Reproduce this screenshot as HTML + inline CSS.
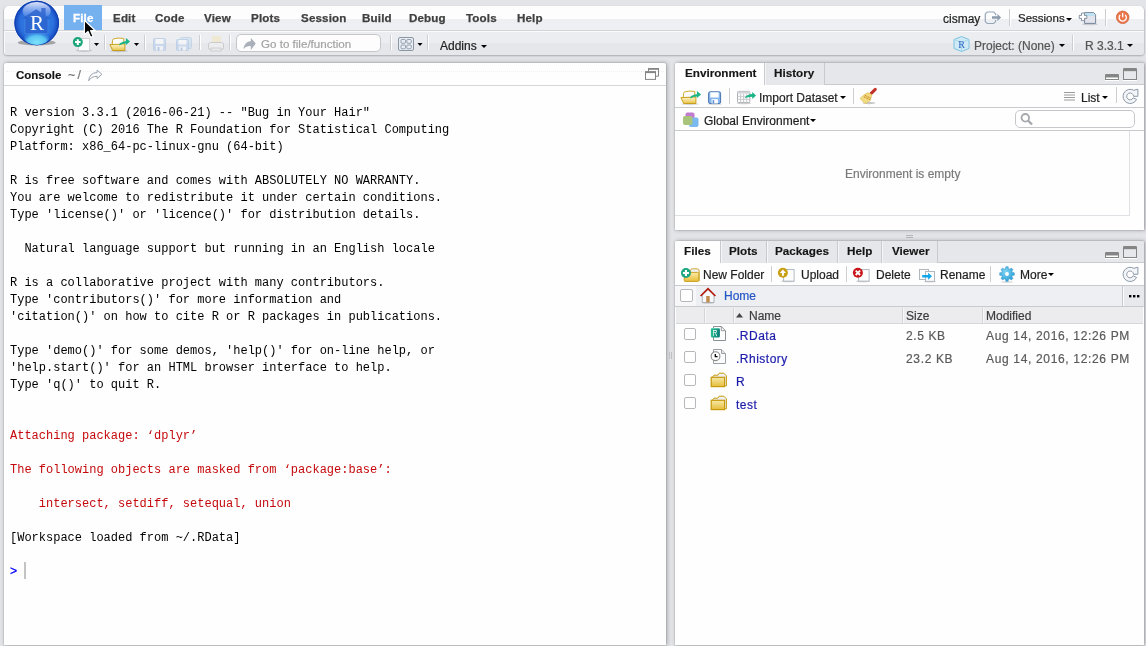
<!DOCTYPE html>
<html><head><meta charset="utf-8">
<style>
*{margin:0;padding:0;box-sizing:border-box}
html,body{-webkit-font-smoothing:antialiased;width:1146px;height:646px;overflow:hidden;background:#e3e4e8;font-family:"Liberation Sans",sans-serif;position:relative}
.a{position:absolute}
.t{position:absolute;white-space:pre;line-height:1;-webkit-text-stroke-width:.2px}
.menu{font-weight:bold;font-size:11.6px;color:#404040;top:12px;letter-spacing:.15px;-webkit-text-stroke:.25px #404040}
.vs{position:absolute;width:1px;background:#cdced2;box-shadow:1px 0 0 #fff}
.pane{position:absolute;background:#fefefe;border-radius:2px 2px 0 0;box-shadow:0 0 0 1px rgba(0,0,0,.06),1px 0 4px rgba(0,0,0,.3)}
.con{font-family:"Liberation Mono",monospace;font-size:12px;color:#000;left:10px;top:105px;line-height:17px;white-space:pre}
.red{color:#c5090c}
.tabbar{position:absolute;background:#e6e7eb;border-bottom:1px solid #c9cace;border-radius:2px 2px 0 0}
.tab{position:absolute;height:22px;background:#e6e7eb;border-right:1px solid #c9cace;box-shadow:inset 1px 0 0 #f6f6f8}
.tab.act{background:#fefefe;height:22px;box-shadow:none}
.tl{position:absolute;white-space:pre;line-height:1;font-weight:bold;font-size:11.7px;color:#151515;-webkit-text-stroke:.15px #151515}
.lbl{position:absolute;white-space:pre;line-height:1;font-size:12px;color:#1e1e1e;-webkit-text-stroke-width:.2px}
.arr{position:absolute;width:0;height:0;border-left:3px solid transparent;border-right:3px solid transparent;border-top:3px solid #000}
.hl{position:absolute;height:1px;background:#c9cace}
.cb{position:absolute;width:12px;height:12px;border:1px solid #b7b7bb;border-radius:2px;background:#fff}
.fn{position:absolute;white-space:pre;line-height:1;font-size:12px;color:#1c1cab;letter-spacing:.5px;-webkit-text-stroke-width:.2px}
.gr{position:absolute;white-space:pre;line-height:1;font-size:12px;color:#5a5a5a;-webkit-text-stroke-width:.2px}
</style></head><body><div id="root" style="position:absolute;left:0;top:0;width:1146px;height:646px;will-change:transform">

<!-- ================= MAIN TOOLBAR ================= -->
<div class="a" style="left:4px;top:6px;width:1140px;height:49px;border-radius:5px 5px 3px 3px;overflow:hidden;box-shadow:0 1px 2px rgba(0,0,0,.25),-1px 0 1px rgba(0,0,0,.08),1px 0 1px rgba(0,0,0,.08)">
  <div class="a" style="left:0;top:0;width:1140px;height:12.5px;background:#fdfdfd"></div>
  <div class="a" style="left:0;top:12.5px;width:1140px;height:11.5px;background:#eeeff2"></div>
  <div class="a" style="left:0;top:24px;width:1140px;height:1px;background:#d3d4d8"></div>
  <div class="a" style="left:0;top:25px;width:1140px;height:1px;background:#fbfbfc"></div>
  <div class="a" style="left:0;top:26px;width:1140px;height:11px;background:#ecedf0"></div>
  <div class="a" style="left:0;top:37px;width:1140px;height:12px;background:#e6e7eb"></div>
  <div class="a" style="left:0;top:25px;width:1px;height:22px;background:#fafafb"></div>
</div>
<div class="a" style="left:64px;top:5px;width:38px;height:25px;background:#75b1ef"></div>
<div class="t menu" style="left:73px;color:#fff;-webkit-text-stroke:.3px #fff">File</div>
<div class="t menu" style="left:113px">Edit</div>
<div class="t menu" style="left:155px">Code</div>
<div class="t menu" style="left:204px">View</div>
<div class="t menu" style="left:251px">Plots</div>
<div class="t menu" style="left:301px">Session</div>
<div class="t menu" style="left:362px">Build</div>
<div class="t menu" style="left:409px">Debug</div>
<div class="t menu" style="left:466px">Tools</div>
<div class="t menu" style="left:517px">Help</div>

<!-- R logo -->
<svg class="a" style="left:12px;top:0px" width="50" height="48" viewBox="0 0 50 48">
  <defs>
    <radialGradient id="rg" cx="50%" cy="50%" r="50%">
      <stop offset="0" stop-color="#3d8fe6"/><stop offset="0.75" stop-color="#2b6fdd"/><stop offset="1" stop-color="#1244bb"/>
    </radialGradient>
    <radialGradient id="glow" cx="50%" cy="85%" r="60%">
      <stop offset="0" stop-color="#7fe2fb"/><stop offset="0.6" stop-color="#58c4f3"/><stop offset="1" stop-color="#3d9ae9" stop-opacity="0"/>
    </radialGradient>
    <linearGradient id="hlg" x1="0" y1="0" x2="0" y2="1"><stop offset="0" stop-color="#eceeff" stop-opacity=".95"/><stop offset="1" stop-color="#8aa8f0" stop-opacity=".1"/></linearGradient>
  </defs>
  <ellipse cx="24.7" cy="42.5" rx="19" ry="3" fill="#000" opacity=".3"/>
  <circle cx="24.7" cy="23" r="22.3" fill="url(#rg)"/>
  <circle cx="24.7" cy="23" r="21.8" fill="none" stroke="#1040b0" stroke-width="1"/>
  <ellipse cx="24.7" cy="36" rx="13" ry="9" fill="url(#glow)"/>
  <ellipse cx="24.7" cy="11" rx="14" ry="9" fill="url(#hlg)"/>
  <path d="M9.4 18.8 L24.3 9.3 L29.3 12.5 L29.3 8.1 L33.6 8.1 L33.6 15.2 L39.2 19 L35.9 19 L35.9 33.6 L13 33.6 L13 18.8 Z" fill="#2a5fcc" opacity=".75"/>
  <path d="M13 19 L13 33.6 L35.9 33.6 L35.9 19" fill="none" stroke="#5a9cf0" stroke-width=".6" opacity=".6"/>
  <text x="25.1" y="29.8" text-anchor="middle" font-family="Liberation Serif" font-size="21" fill="#fff">R</text>
</svg>

<!-- toolbar icons row 2 -->
<svg class="a" style="left:70px;top:34px" width="70" height="20" viewBox="0 0 70 20">
  <ellipse cx="14" cy="16.5" rx="8" ry="1.5" fill="#000" opacity=".15"/>
  <rect x="8.5" y="4.5" width="11" height="12" fill="#fdfdfd" stroke="#cfd3d8"/>
  <circle cx="7.8" cy="8.1" r="5" fill="#1aa57a"/>
  <path d="M7.8 5.3v5.6M5 8.1h5.6" stroke="#fff" stroke-width="2"/>
  <path d="M24 9h5l-2.5 3z" fill="#000"/>

  <path d="M64 9h5l-2.5 3z" fill="#000"/>
</svg>
<svg class="a" style="left:107px;top:33px" width="26" height="20" viewBox="0 0 26 20">
  <ellipse cx="12" cy="18" rx="9" ry="1.2" fill="#000" opacity=".15"/>
  <path d="M5.2 12 L5.6 7.3 Q5.8 6 7 5.8 L11 5.1 L16.8 5.4 L16.8 12 Z" fill="#fdfdfd" stroke="#c9a21a" stroke-width=".9"/>
  <path d="M2.9 11.6 L17.9 11 L17.9 17.5 L5.7 17.5 Z" fill="url(#fo2)" stroke="#c39a10" stroke-width=".9" stroke-linejoin="round"/>
  <path d="M12.3 11.2 Q14 8.6 18.9 8.3 L18.9 4.9 L23.1 8.4 L18.9 11.9 L18.9 10.6 Q15 10.6 12.3 12.6 Z" fill="#1db588"/>
</svg>
<div class="vs" style="left:104px;top:35px;height:15px"></div>
<div class="vs" style="left:144px;top:35px;height:15px"></div>
<svg class="a" style="left:150px;top:34px" width="80" height="20" viewBox="0 0 80 20">
  <g opacity=".45">
  <rect x="3.5" y="4.5" width="12" height="12" rx="1" fill="#a6c6ee" stroke="#8fb0da"/>
  <rect x="5.5" y="5" width="8" height="5" fill="#fff"/>
  <rect x="6" y="12" width="7" height="4.5" fill="#fff"/><rect x="7.5" y="13" width="2" height="3.5" fill="#7ea6dc"/>
  <rect x="30.5" y="3.5" width="11" height="11" rx="1" fill="#bcdaf0" stroke="#9dbcd8"/>
  <rect x="26.5" y="5.5" width="12" height="11" rx="1" fill="#a6c6ee" stroke="#8fb0da"/>
  <rect x="28.5" y="6" width="8" height="4.5" fill="#fff"/>
  <rect x="29" y="12.5" width="7" height="4" fill="#fff"/><rect x="30.5" y="13.5" width="2" height="3" fill="#7ea6dc"/>
  </g>
  <g opacity=".5">
  <rect x="62" y="2" width="9" height="6" fill="#f3e6b8"/>
  <rect x="58.5" y="8.5" width="15" height="7" rx="2" fill="#f4f4f4" stroke="#aaa"/>
  <rect x="61" y="14" width="10" height="3" fill="#eee" stroke="#aaa" stroke-width=".8"/>
  </g>
</svg>
<div class="vs" style="left:199px;top:35px;height:15px"></div>
<div class="vs" style="left:229px;top:35px;height:15px"></div>
<div class="a" style="left:236px;top:34px;width:145px;height:18px;border:1px solid #c6c6ca;border-radius:5px;background:#fdfdfd"></div>
<svg class="a" style="left:242px;top:37px" width="16" height="14" viewBox="0 0 16 14">
  <path d="M1.3 12.3 Q2.5 4.5 8.8 4.2 L8.8 1.1 L13.8 6.45 L8.8 12.9 L8.8 9 Q4 8.8 1.3 12.3 Z" fill="#a9b0b9"/>
</svg>
<div class="t" style="left:261px;top:38px;font-size:11.6px;color:#a3a3a3">Go to file/function</div>
<div class="vs" style="left:390px;top:35px;height:15px"></div>
<svg class="a" style="left:396px;top:35px" width="30" height="18" viewBox="0 0 30 18">
  <rect x="2.5" y="2.5" width="15" height="13" rx="1.5" fill="#e9edf3" stroke="#8b97a6"/>
  <rect x="5" y="4.5" width="4.5" height="3.8" rx="1" fill="none" stroke="#8b97a6" stroke-width=".9"/>
  <rect x="10.8" y="4.5" width="4.5" height="3.8" rx="1" fill="none" stroke="#8b97a6" stroke-width=".9"/>
  <rect x="5" y="10" width="4.5" height="3.8" rx="1" fill="none" stroke="#8b97a6" stroke-width=".9"/>
  <rect x="10.8" y="10" width="4.5" height="3.8" rx="1" fill="none" stroke="#8b97a6" stroke-width=".9"/>
  <path d="M21.5 8h5l-2.5 3z" fill="#000"/>
</svg>
<div class="vs" style="left:427px;top:35px;height:15px"></div>
<div class="t" style="left:440px;top:40px;font-size:12px;color:#1e1e1e">Addins</div>
<div class="arr" style="left:481px;top:45px"></div>

<!-- right side of toolbar -->
<div class="t" style="left:943px;top:13px;font-size:12px;color:#222">cismay</div>
<svg class="a" style="left:983px;top:9px" width="20" height="17" viewBox="0 0 20 17">
  <path d="M12.6 6.2 V4.9 L10.7 3 H4.2 L2.3 4.9 V12.6 L4.2 14.5 H10.7 L12.6 12.6 V10.9" fill="none" stroke="#97a7b9" stroke-width="1.2"/>
  <path d="M9 7.2 H14.4 V5 L18.1 8.5 L14.4 12 V9.8 H9 Z" fill="#8c9cae"/>
</svg>
<div class="vs" style="left:1009px;top:9px;height:17px"></div>
<div class="t" style="left:1018px;top:13px;font-size:11.5px;color:#222">Sessions</div>
<div class="arr" style="left:1066px;top:18px"></div>
<svg class="a" style="left:1078px;top:10px" width="22" height="16" viewBox="0 0 22 16">
  <ellipse cx="12" cy="14.2" rx="8" ry="1" fill="#000" opacity=".15"/>
  <path d="M6.6 2.6 H15.6 L17.6 4.6 V13.4 H6.6 Z" fill="#e3e4eb" stroke="#74869a" stroke-width="1" stroke-linejoin="round"/>
  <path d="M7.1 3.1 H15.4 L17.1 4.8 V6 H7.1 Z" fill="#bfe2f3"/>
  <path d="M3.5 3.1 H6.5 V5.4 H8.8 V8.4 H6.5 V10.7 H3.5 V8.4 H1.2 V5.4 H3.5 Z" fill="#fff" stroke="#7a8796" stroke-width=".9" stroke-linejoin="round"/>
</svg>
<div class="vs" style="left:1105px;top:9px;height:17px"></div>
<svg class="a" style="left:1114px;top:9px" width="17" height="17" viewBox="0 0 17 17">
  <circle cx="8.7" cy="8.3" r="6.3" fill="#ea774c" stroke="#cf5f38" stroke-width=".7"/>
  <path d="M6.2 5.9 A3.6 3.6 0 1 0 11.2 5.9" fill="none" stroke="#fff" stroke-width="1.3"/>
  <path d="M8.7 4.1 V8.3" stroke="#fff" stroke-width="1.3"/>
</svg>
<svg class="a" style="left:952px;top:35px" width="19" height="18" viewBox="0 0 19 18">
  <path d="M9.5 1.5 L17 4.5 L17 13.5 L9.5 16.5 L2 13.5 L2 4.5 Z" fill="#cfe9f5" stroke="#7cc3e0"/>
  <path d="M2 4.5 L9.5 7.5 L17 4.5 M9.5 7.5 L9.5 16.5" fill="none" stroke="#9fd4ea" stroke-width=".8"/>
  <text x="9.7" y="13" text-anchor="middle" font-family="Liberation Serif" font-size="10" fill="#2b63c9">R</text>
</svg>
<div class="t" style="left:974px;top:40px;font-size:12px;color:#555">Project: (None)</div>
<div class="arr" style="left:1059px;top:44px"></div>
<div class="vs" style="left:1072px;top:35px;height:16px"></div>
<div class="t" style="left:1085px;top:40px;font-size:12px;color:#555">R 3.3.1</div>
<div class="arr" style="left:1127px;top:44px"></div>

<!-- ================= CONSOLE PANE ================= -->
<div class="pane" style="left:4px;top:63px;width:662px;height:582px"></div>
<div class="hl" style="left:4px;top:85px;width:662px;background:#d6d7db"></div>
<div class="a" style="left:6px;top:71px;width:658px;height:0;border-top:1px dotted #f0f0f3"></div>
<div class="tl" style="left:16px;top:70px;font-size:11.5px;color:#111">Console</div>
<div class="t" style="left:68px;top:69px;font-size:12.5px;color:#777;letter-spacing:2.2px">~/</div>
<svg class="a" style="left:87px;top:68px" width="17" height="15" viewBox="0 0 17 15">
  <path d="M1.6 12.8 Q2.5 4.8 10.1 4.5 L10.1 2.1 L14.9 6.3 L10.1 10.6 L10.1 8.3 Q4.5 8.3 1.6 12.8 Z" fill="#fbfbfc" stroke="#9aa4b0" stroke-width="1" stroke-linejoin="round"/>
</svg>
<svg class="a" style="left:644px;top:67px" width="16" height="15" viewBox="0 0 16 15">
  <path d="M4.5 4 V1.5 H14.5 V9.2 H11.5" fill="none" stroke="#858585" stroke-width="1"/>
  <rect x="4" y="1" width="11" height="1.8" fill="#858585"/>
  <rect x="1.5" y="4.8" width="10" height="7.6" fill="#fff" stroke="#858585" stroke-width="1"/>
  <rect x="1" y="4.3" width="11" height="1.8" fill="#858585"/>
</svg>
<div class="con a">R version 3.3.1 (2016-06-21) -- "Bug in Your Hair"
Copyright (C) 2016 The R Foundation for Statistical Computing
Platform: x86_64-pc-linux-gnu (64-bit)

R is free software and comes with ABSOLUTELY NO WARRANTY.
You are welcome to redistribute it under certain conditions.
Type 'license()' or 'licence()' for distribution details.

  Natural language support but running in an English locale

R is a collaborative project with many contributors.
Type 'contributors()' for more information and
'citation()' on how to cite R or R packages in publications.

Type 'demo()' for some demos, 'help()' for on-line help, or
'help.start()' for an HTML browser interface to help.
Type 'q()' to quit R.


<span class="red">Attaching package: &#8216;dplyr&#8217;</span>

<span class="red">The following objects are masked from &#8216;package:base&#8217;:</span>

<span class="red">    intersect, setdiff, setequal, union</span>

[Workspace loaded from ~/.RData]

<span style="color:#0000ff;-webkit-text-stroke:.3px #0000ff">&gt;</span> </div>
<div class="a" style="left:24px;top:562px;width:2px;height:17px;background:#c4c4c4"></div>

<!-- ================= ENVIRONMENT PANE ================= -->
<div class="pane" style="left:675px;top:63px;width:469px;height:167px"></div>
<div class="tabbar" style="left:675px;top:63px;width:469px;height:22px"></div>
<div class="tab act" style="left:675px;top:63px;width:90px;border-radius:2px 0 0 0"></div>
<div class="tab" style="left:765px;top:63px;width:60px"></div>
<div class="tl" style="left:685px;top:67px">Environment</div>
<div class="tl" style="left:774px;top:67px">History</div>
<!-- min / max -->
<svg class="a" style="left:1104px;top:67px" width="36" height="15" viewBox="0 0 36 15">
  <rect x="1" y="13" width="14" height="1" fill="#fff"/>
  <rect x="19" y="13" width="14" height="1" fill="#fff"/>
  <rect x="1.5" y="8.5" width="13" height="4" fill="#fff" stroke="#858585"/>
  <path d="M1 10.5 V8.3 Q1 7 2.3 7 H13.7 Q15 7 15 8.3 V10.5 Z" fill="#858585"/>
  <rect x="19.5" y="2.5" width="13" height="10" fill="#e7e8ec" stroke="#858585"/>
  <rect x="20" y="3.5" width="12" height="1" fill="#fff"/>
  <path d="M19 4.2 V2.3 Q19 1 20.3 1 H31.7 Q33 1 33 2.3 V4.2 Z" fill="#858585"/>
</svg>
<div class="hl" style="left:675px;top:107px;width:469px"></div>
<svg class="a" style="left:678px;top:86px" width="48" height="20" viewBox="0 0 48 20">
  <defs><linearGradient id="fo2" x1="0" y1="0" x2="0" y2="1"><stop offset="0" stop-color="#fff6cf"/><stop offset="1" stop-color="#e9c34a"/></linearGradient></defs>
  <ellipse cx="12" cy="18" rx="9" ry="1.2" fill="#000" opacity=".15"/>
  <path d="M5.2 12 L5.6 7.3 Q5.8 6 7 5.8 L11 5.1 L16.8 5.4 L16.8 12 Z" fill="#fdfdfd" stroke="#c9a21a" stroke-width=".9"/>
  <path d="M2.9 11.6 L17.9 11 L17.9 17.5 L5.7 17.5 Z" fill="url(#fo2)" stroke="#c39a10" stroke-width=".9" stroke-linejoin="round"/>
  <path d="M12.3 11.2 Q14 8.6 18.9 8.3 L18.9 4.9 L23.1 8.4 L18.9 11.9 L18.9 10.6 Q15 10.6 12.3 12.6 Z" fill="#1db588"/>
  <ellipse cx="37" cy="18" rx="7" ry="1.2" fill="#000" opacity=".15"/>
  <rect x="30.6" y="5.8" width="12" height="11.7" rx="1.5" fill="#86b6ee" stroke="#4b76ad" stroke-width="1"/>
  <rect x="32.3" y="6.3" width="8.4" height="5.2" fill="#fff"/>
  <rect x="33.6" y="13.2" width="6.3" height="4.3" fill="#fff"/><rect x="34.6" y="14.1" width="1.6" height="3.4" fill="#5f92d6"/>
</svg>
<div class="vs" style="left:729px;top:88px;height:16px"></div>
<svg class="a" style="left:735px;top:86px" width="24" height="20" viewBox="0 0 24 20">
  <ellipse cx="9" cy="17.3" rx="7" ry="1" fill="#000" opacity=".18"/>
  <rect x="2.5" y="5.4" width="12.3" height="11.2" rx="1" fill="#fff" stroke="#a9adb3" stroke-width="1"/>
  <rect x="2.5" y="5.4" width="12.3" height="2.2" fill="#d3d5d9"/>
  <path d="M2.5 10.3h12.3M2.5 13.3h12.3M5.6 7.5v9M8.6 7.5v9M11.7 7.5v9" stroke="#c7cace" stroke-width="1"/>
  <path d="M9.6 12.3 Q11.5 8.3 17.2 8.1 L17.2 5.9 L21.1 9.4 L17.2 12.9 L17.2 10.8 Q12.5 10.8 9.6 12.3 Z" fill="#1db588"/>
</svg>
<div class="lbl" style="left:759px;top:92px">Import Dataset</div>
<div class="arr" style="left:840px;top:96px"></div>
<div class="vs" style="left:853px;top:88px;height:16px"></div>
<svg class="a" style="left:858px;top:87px" width="20" height="18" viewBox="0 0 20 18">
  <ellipse cx="11" cy="16" rx="6.5" ry="1.2" fill="#000" opacity=".22"/>
  <path d="M13.2 6.4 L17.3 2.4" stroke="#c3302a" stroke-width="3" stroke-linecap="round"/>
  <path d="M10.3 5.6 L13.9 7.8 L12.3 13.6 L7 16.8 L2 11.4 L6.3 7.6 Z" fill="#f2da80" stroke="#dcbd55" stroke-width=".6" stroke-linejoin="round"/>
  <path d="M6.8 8.3 L12.9 11.3 M5.9 9.8 L12.4 12.9" stroke="#c4801f" stroke-width="1" stroke-dasharray="1.2 .6"/>
</svg>
<svg class="a" style="left:1063px;top:90px" width="14" height="13" viewBox="0 0 14 13">
  <path d="M1 2.5h11M1 5h11M1 7.5h11M1 10h11" stroke="#9a9a9a" stroke-width="1"/>
</svg>
<div class="lbl" style="left:1081px;top:92px">List</div>
<div class="arr" style="left:1102px;top:96px"></div>
<div class="vs" style="left:1116px;top:87px;height:16px"></div>
<svg class="a" style="left:1116px;top:84px" width="24" height="24" viewBox="0 0 24 24">
  <path d="M17.8 6.3 A7.1 7.1 0 1 0 20.6 15.4 L17.2 13.8 A3.4 3.4 0 1 1 17.5 12.3 L21.9 12.3 L21.9 5.2 Z" fill="#f3f5f8" stroke="#8c99a8" stroke-width="1" stroke-linejoin="round"/>
</svg>
<div class="hl" style="left:675px;top:130px;width:469px"></div>
<svg class="a" style="left:682px;top:112px" width="18" height="16" viewBox="0 0 18 16">
  <rect x="3.5" y="0.5" width="9" height="8" rx="2" fill="#c07ad0"/>
  <rect x="7" y="5.5" width="9.5" height="9.5" rx="2" fill="#7ab8f0"/>
  <rect x="1" y="4" width="9.5" height="9" rx="2" fill="#a8c47a"/>
</svg>
<div class="lbl" style="left:704px;top:115px">Global Environment</div>
<div class="arr" style="left:810px;top:119px"></div>
<div class="a" style="left:1015px;top:110px;width:120px;height:18px;border:1px solid #c6c7cb;border-radius:5px;background:#fff"></div>
<svg class="a" style="left:1019px;top:111px" width="16" height="16" viewBox="0 0 16 16">
  <circle cx="6.3" cy="6.8" r="3.8" fill="none" stroke="#a5a9ae" stroke-width="1.8"/>
  <path d="M9 9.5 L13 13.5" stroke="#a5a9ae" stroke-width="2.4"/>
</svg>
<div class="a" style="left:675px;top:131px;width:455px;height:85px;border-right:1px solid #dfe0e3;border-bottom:1px solid #dfe0e3"></div>
<div class="t" style="left:845px;top:168px;font-size:12px;color:#7a7a7a">Environment is empty</div>

<!-- splitter handles -->
<div class="a" style="left:906px;top:235px;width:7px;height:1px;background:#b3b4b8"></div>
<div class="a" style="left:906px;top:237px;width:7px;height:1px;background:#b3b4b8"></div>
<div class="a" style="left:669px;top:352px;width:1px;height:7px;background:#c0c1c5"></div>
<div class="a" style="left:671px;top:352px;width:1px;height:7px;background:#c0c1c5"></div>

<!-- ================= FILES PANE ================= -->
<div class="pane" style="left:675px;top:241px;width:469px;height:404px"></div>
<div class="tabbar" style="left:675px;top:241px;width:469px;height:22px"></div>
<div class="tab act" style="left:675px;top:241px;width:46px;border-radius:2px 0 0 0"></div>
<div class="tab" style="left:721px;top:241px;width:46px"></div>
<div class="tab" style="left:767px;top:241px;width:71px"></div>
<div class="tab" style="left:838px;top:241px;width:44px"></div>
<div class="tab" style="left:882px;top:241px;width:56px"></div>
<div class="tl" style="left:684px;top:245px">Files</div>
<div class="tl" style="left:729px;top:245px">Plots</div>
<div class="tl" style="left:775px;top:245px">Packages</div>
<div class="tl" style="left:847px;top:245px">Help</div>
<div class="tl" style="left:892px;top:245px">Viewer</div>
<svg class="a" style="left:1104px;top:245px" width="36" height="15" viewBox="0 0 36 15">
  <rect x="1" y="13" width="14" height="1" fill="#fff"/>
  <rect x="19" y="13" width="14" height="1" fill="#fff"/>
  <rect x="1.5" y="8.5" width="13" height="4" fill="#fff" stroke="#858585"/>
  <path d="M1 10.5 V8.3 Q1 7 2.3 7 H13.7 Q15 7 15 8.3 V10.5 Z" fill="#858585"/>
  <rect x="19.5" y="2.5" width="13" height="10" fill="#e7e8ec" stroke="#858585"/>
  <rect x="20" y="3.5" width="12" height="1" fill="#fff"/>
  <path d="M19 4.2 V2.3 Q19 1 20.3 1 H31.7 Q33 1 33 2.3 V4.2 Z" fill="#858585"/>
</svg>

<!-- files toolbar -->
<svg class="a" style="left:676px;top:262px" width="26" height="24" viewBox="0 0 26 24">
  <defs><linearGradient id="fg1" x1="0" y1="0" x2="0" y2="1"><stop offset="0" stop-color="#fbe9a6"/><stop offset="1" stop-color="#e8bf3a"/></linearGradient></defs>
  <path d="M14.5 10 L14.5 8.5 Q14.5 6.8 16.5 6.8 L21 6.8 Q23.2 6.8 23.2 9 L23.2 19" fill="#eef0f6" stroke="#caa01c" stroke-width=".9"/>
  <rect x="8.2" y="10.4" width="14.6" height="9" rx="1" fill="url(#fg1)" stroke="#c49a12" stroke-width=".9"/>
  <circle cx="9.95" cy="11" r="5" fill="#1ea582"/>
  <path d="M9.95 8v6M6.95 11h6" stroke="#fff" stroke-width="2.1"/>
</svg>
<div class="lbl" style="left:703px;top:269px">New Folder</div>
<div class="vs" style="left:771px;top:266px;height:16px"></div>
<svg class="a" style="left:774px;top:262px" width="30" height="24" viewBox="0 0 30 24">
  <ellipse cx="14" cy="19.3" rx="7" ry="1" fill="#000" opacity=".18"/>
  <rect x="9.6" y="7.6" width="10.5" height="11.5" fill="#fdfdfd" stroke="#a8b2be" stroke-width=".9"/>
  <circle cx="8.9" cy="10.8" r="5" fill="#c9a015"/>
  <path d="M8.9 7.6 L12 10.9 L9.9 10.9 L9.9 13.7 L7.9 13.7 L7.9 10.9 L5.8 10.9 Z" fill="#fff"/>
</svg>
<div class="lbl" style="left:801px;top:269px">Upload</div>
<div class="vs" style="left:846px;top:266px;height:16px"></div>
<svg class="a" style="left:849px;top:262px" width="30" height="24" viewBox="0 0 30 24">
  <ellipse cx="14" cy="19.3" rx="7" ry="1" fill="#000" opacity=".18"/>
  <rect x="9.6" y="7.6" width="10.5" height="11.5" fill="#fdfdfd" stroke="#a8b2be" stroke-width=".9"/>
  <circle cx="8.9" cy="10.8" r="5" fill="#c8161a"/>
  <path d="M6.7 8.6 L11.1 13 M11.1 8.6 L6.7 13" stroke="#fff" stroke-width="1.9"/>
</svg>
<div class="lbl" style="left:876px;top:269px">Delete</div>
<svg class="a" style="left:914px;top:262px" width="30" height="24" viewBox="0 0 30 24">
  <ellipse cx="16" cy="19.5" rx="6" ry="1" fill="#000" opacity=".15"/>
  <rect x="5.5" y="7.5" width="9" height="10" fill="#fdfdfd" stroke="#a9b0b8" stroke-width=".9"/>
  <rect x="11.5" y="9.5" width="9" height="9.8" fill="#fdfdfd" stroke="#a9b0b8" stroke-width=".9"/>
  <path d="M8.2 13 L14.1 13 L14.1 10.8 L18 14.3 L14.1 17.8 L14.1 15.6 L8.2 15.6 Z" fill="#12a6ea"/>
</svg>
<div class="lbl" style="left:940px;top:269px">Rename</div>
<div class="vs" style="left:990px;top:266px;height:16px"></div>
<svg class="a" style="left:998px;top:265px" width="18" height="18" viewBox="0 0 18 18">
  <defs><radialGradient id="gg" cx="40%" cy="35%" r="70%"><stop offset="0" stop-color="#7fd3f3"/><stop offset="1" stop-color="#2a9fd6"/></radialGradient></defs>
  <ellipse cx="9" cy="17" rx="6" ry="1" fill="#000" opacity=".12"/>
  <path d="M14.42 7.61 L16.31 7.84 L16.31 10.16 L14.42 10.39 L13.82 11.85 L14.99 13.35 L13.35 14.99 L11.85 13.82 L10.39 14.42 L10.16 16.31 L7.84 16.31 L7.61 14.42 L6.15 13.82 L4.65 14.99 L3.01 13.35 L4.18 11.85 L3.58 10.39 L1.69 10.16 L1.69 7.84 L3.58 7.61 L4.18 6.15 L3.01 4.65 L4.65 3.01 L6.15 4.18 L7.61 3.58 L7.84 1.69 L10.16 1.69 L10.39 3.58 L11.85 4.18 L13.35 3.01 L14.99 4.65 L13.82 6.15 Z" fill="url(#gg)" stroke="#2a8fc4" stroke-width=".5"/>
  <circle cx="9" cy="9" r="1.9" fill="#fff"/>
</svg>
<div class="lbl" style="left:1020px;top:269px">More</div>
<div class="arr" style="left:1048px;top:273px"></div>
<svg class="a" style="left:1116px;top:262px" width="24" height="24" viewBox="0 0 24 24">
  <path d="M17.8 6.3 A7.1 7.1 0 1 0 20.6 15.4 L17.2 13.8 A3.4 3.4 0 1 1 17.5 12.3 L21.9 12.3 L21.9 5.2 Z" fill="#f3f5f8" stroke="#8c99a8" stroke-width="1" stroke-linejoin="round"/>
</svg>
<div class="hl" style="left:675px;top:285px;width:469px"></div>

<!-- path bar -->
<div class="a" style="left:675px;top:286px;width:469px;height:20px;background:#eeeff2"></div>
<div class="a" style="left:675px;top:286px;width:21px;height:20px;background:#f7f7f9"></div>
<div class="cb" style="left:680px;top:289px;width:13px;height:13px"></div>
<svg class="a" style="left:698px;top:286px" width="20" height="18" viewBox="0 0 20 18">
  <ellipse cx="10" cy="16.8" rx="6.5" ry="1" fill="#000" opacity=".15"/>
  <path d="M4.3 9 L4.3 16.5 L16 16.5 L16 9 L10 3.5 Z" fill="#f7f8fa" stroke="#9aa3ad" stroke-width=".8"/>
  <rect x="8.2" y="10" width="3.5" height="6.3" fill="#c48b4c"/>
  <path d="M2.6 10 L10 2.6 L17.4 10" fill="none" stroke="#b31c0c" stroke-width="1.7"/>
</svg>
<div class="t" style="left:724px;top:290px;font-size:12px;color:#2456c8">Home</div>
<div class="a" style="left:1122px;top:286px;width:22px;height:20px;border-left:1px solid #c9cace;background:#e8e9ec"></div>
<div class="a" style="left:1123px;top:287px;width:1px;height:19px;background:#fbfbfc"></div>
<svg class="a" style="left:1128px;top:294px" width="13" height="5" viewBox="0 0 13 5"><rect x="1" y="1" width="2.4" height="2.4" fill="#000"/><rect x="5" y="1" width="2.4" height="2.4" fill="#000"/><rect x="9" y="1" width="2.4" height="2.4" fill="#000"/></svg>
<div class="hl" style="left:675px;top:306px;width:469px"></div>

<!-- table header -->
<div class="a" style="left:676px;top:307px;width:467px;height:16px;background:#ececef"></div>
<div class="a" style="left:704px;top:308px;width:1px;height:15px;background:#d3d4d8"></div>
<div class="a" style="left:705px;top:308px;width:1px;height:15px;background:#f8f8fa"></div>
<div class="a" style="left:733px;top:308px;width:1px;height:15px;background:#d3d4d8"></div>
<div class="a" style="left:734px;top:308px;width:1px;height:15px;background:#f8f8fa"></div>
<div class="a" style="left:902px;top:308px;width:1px;height:15px;background:#d3d4d8"></div>
<div class="a" style="left:903px;top:308px;width:1px;height:15px;background:#f8f8fa"></div>
<div class="a" style="left:982px;top:308px;width:1px;height:15px;background:#d3d4d8"></div>
<div class="a" style="left:983px;top:308px;width:1px;height:15px;background:#f8f8fa"></div>
<div class="a" style="left:676px;top:323px;width:467px;height:1px;background:#d6d7db"></div>
<svg class="a" style="left:735px;top:311px" width="10" height="8" viewBox="0 0 10 8"><path d="M1 6.5 L4.5 2 L8 6.5 Z" fill="#444"/></svg>
<div class="gr" style="left:749px;top:310px;color:#3c3c3c">Name</div>
<div class="gr" style="left:906px;top:310px;color:#3c3c3c">Size</div>
<div class="gr" style="left:986px;top:310px;color:#3c3c3c">Modified</div>

<!-- rows -->
<div class="cb" style="left:684px;top:328px"></div>
<div class="cb" style="left:684px;top:351px"></div>
<div class="cb" style="left:684px;top:374px"></div>
<div class="cb" style="left:684px;top:397px"></div>

<svg class="a" style="left:709px;top:325px" width="20" height="17" viewBox="0 0 20 17">
  <defs><linearGradient id="rdg" x1="0" y1="0" x2="1" y2="0"><stop offset="0" stop-color="#22bf90"/><stop offset="1" stop-color="#0b7a76"/></linearGradient></defs>
  <path d="M4.5 1.5 L12.3 1.5 L16.5 5.7 L16.5 15.5 L4.5 15.5 Z" fill="#fdfdfd" stroke="#8d9196"/>
  <path d="M12.3 1.5 L12.3 5.7 L16.5 5.7" fill="none" stroke="#8d9196" stroke-width=".9"/>
  <rect x="1.9" y="3.1" width="9" height="9.5" rx="1.5" fill="url(#rdg)"/>
  <rect x="2.3" y="3.1" width="8.2" height="1" fill="#7fe0c8" opacity=".7"/>
  <text x="6" y="11.2" text-anchor="middle" font-family="Liberation Sans" font-size="8.5" fill="#fff" transform="translate(6 0) scale(.8 1) translate(-6 0)">R</text>
</svg>
<div class="fn" style="left:736px;top:330px">.RData</div>
<div class="gr" style="left:906px;top:330px;letter-spacing:.6px">2.5 KB</div>
<div class="gr" style="left:986px;top:330px;letter-spacing:.66px">Aug 14, 2016, 12:26 PM</div>

<svg class="a" style="left:709px;top:348px" width="20" height="17" viewBox="0 0 20 17">
  <path d="M4.5 1.5 L12.5 1.5 L16.5 5.5 L16.5 15.5 L4.5 15.5 Z" fill="#fbfbfb" stroke="#9aa0a6"/>
  <path d="M12.5 1.5 L12.5 5.5 L16.5 5.5" fill="#e6e6e6" stroke="#9aa0a6"/>
  <circle cx="6.5" cy="8.2" r="4.4" fill="#fff" stroke="#8a8a8a" stroke-width="1.1"/>
  <path d="M6.3 6 V8.6 H8.6" fill="none" stroke="#000" stroke-width="1.3"/>
</svg>
<div class="fn" style="left:736px;top:353px">.Rhistory</div>
<div class="gr" style="left:906px;top:353px;letter-spacing:.65px">23.2 KB</div>
<div class="gr" style="left:986px;top:353px;letter-spacing:.66px">Aug 14, 2016, 12:26 PM</div>

<svg class="a" style="left:709px;top:372px" width="22" height="18" viewBox="0 0 22 18">
  <defs><linearGradient id="fg372" x1="0" y1="0" x2="0" y2="1"><stop offset="0" stop-color="#f6e9a8"/><stop offset="1" stop-color="#e6bd3a"/></linearGradient></defs>
  <path d="M3.1 5.6 L5 3.2 L8.9 3.2 L10.2 1.2 L14.8 1.2 L17.4 3.8 L17.4 13.8 L3.1 13.8 Z" fill="#eef0f5" stroke="#c69a0c" stroke-width="1" stroke-linejoin="round"/>
  <rect x="2.2" y="5.3" width="13.4" height="9.3" fill="url(#fg372)" stroke="#c69a0c" stroke-width="1.2"/>
</svg>
<div class="fn" style="left:736px;top:376px">R</div>

<svg class="a" style="left:709px;top:395px" width="22" height="18" viewBox="0 0 22 18">
  <defs><linearGradient id="fg395" x1="0" y1="0" x2="0" y2="1"><stop offset="0" stop-color="#f6e9a8"/><stop offset="1" stop-color="#e6bd3a"/></linearGradient></defs>
  <path d="M3.1 5.6 L5 3.2 L8.9 3.2 L10.2 1.2 L14.8 1.2 L17.4 3.8 L17.4 13.8 L3.1 13.8 Z" fill="#eef0f5" stroke="#c69a0c" stroke-width="1" stroke-linejoin="round"/>
  <rect x="2.2" y="5.3" width="13.4" height="9.3" fill="url(#fg395)" stroke="#c69a0c" stroke-width="1.2"/>
</svg>
<div class="fn" style="left:736px;top:399px">test</div>

<!-- mouse cursor -->
<svg class="a" style="left:82px;top:18px" width="18" height="24" viewBox="0 0 18 24">
  <path d="M2.4 2.3 L2.4 16.7 L6 13.5 L8.6 19.3 L11.1 18.3 L8.6 12.7 L13.3 12.7 Z" fill="#000" stroke="#fff" stroke-width="1.2" stroke-linejoin="round"/>
</svg>

</div></body></html>
